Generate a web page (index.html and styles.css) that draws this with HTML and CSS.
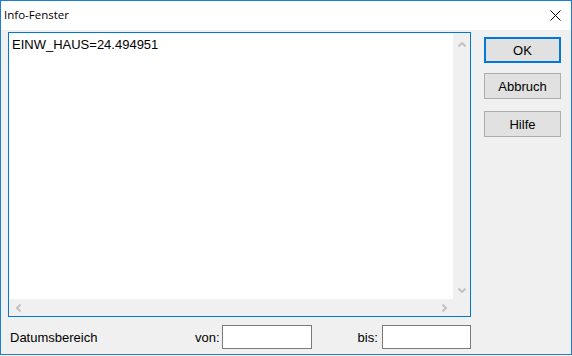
FILE: index.html
```html
<!DOCTYPE html>
<html lang="de">
<head>
    <meta charset="UTF-8">
    <title>Info-Fenster</title>
    <link rel="stylesheet" href="styles.css">
</head>
<body>
    <div class="window">
        <div class="titlebar">
            <span class="title">Info-Fenster</span>
            <span class="close">
                <svg width="11" height="11" viewBox="0 0 11 11"><path d="M0.5 0.5 L10.5 10.5 M10.5 0.5 L0.5 10.5" stroke="#000" stroke-width="1"/></svg>
            </span>
        </div>

        <div class="client">
            <div class="top-row">
                <div class="memo">
                    <div class="memo-text">EINW_HAUS=24.494951</div>
                    <div class="vscroll">
                        <svg width="8" height="5" viewBox="0 0 8 5"><path d="M0.5 4.5 L4 1 L7.5 4.5" fill="none" stroke="#c2c2c2" stroke-width="2"/></svg>
                        <svg width="8" height="5" viewBox="0 0 8 5"><path d="M0.5 0.5 L4 4 L7.5 0.5" fill="none" stroke="#c2c2c2" stroke-width="2"/></svg>
                    </div>
                    <div class="hscroll">
                        <svg width="5" height="8" viewBox="0 0 5 8"><path d="M4.5 0.5 L1 4 L4.5 7.5" fill="none" stroke="#c2c2c2" stroke-width="2"/></svg>
                        <svg width="5" height="8" viewBox="0 0 5 8"><path d="M0.5 0.5 L4 4 L0.5 7.5" fill="none" stroke="#c2c2c2" stroke-width="2"/></svg>
                    </div>
                    <div class="corner"></div>
                </div>

                <div class="buttons">
                    <button class="btn btn-default">OK</button>
                    <button class="btn btn-cancel">Abbruch</button>
                    <button class="btn btn-help">Hilfe</button>
                </div>
            </div>

            <div class="footer">
                <span class="footer-title">Datumsbereich</span>
                <label class="field-label" for="von">von:</label>
                <input type="text" id="von" class="date-input">
                <label class="field-label bis-label" for="bis">bis:</label>
                <input type="text" id="bis" class="date-input bis-input">
            </div>
        </div>
    </div>
</body>
</html>
```

FILE: styles.css
```css
body {
    margin: 0;
    background: #fff;
    font-family: 'Liberation Sans', Arial, sans-serif;
    font-size: 13px;
    color: #000;
}

.window {
    width: 572px;
    height: 355px;
    box-sizing: border-box;
    border: 1px solid #1a7fd4;
    background: #f0f0f0;
    display: flex;
    flex-direction: column;
}

.titlebar {
    height: 29px;
    background: #fff;
    display: flex;
    align-items: center;
    justify-content: space-between;
    padding-left: 3px;
    padding-right: 10px;
}

.title {
    font-family: 'Open Sans', 'Noto Sans', sans-serif;
    font-size: 11.5px;
    margin-top: -2px;
}

.close {
    display: flex;
    margin-top: -1px;
}

.client {
    padding: 2px 0 0 7px;
}

.top-row {
    display: flex;
    align-items: flex-start;
}

/* Memo-Feld mit Scrollbalken */
.memo {
    width: 463px;
    height: 285px;
    box-sizing: border-box;
    border: 1px solid #0078d7;
    background: #fff;
    display: grid;
    grid-template-columns: 1fr 17px;
    grid-template-rows: 1fr 17px;
}

.memo-text {
    padding: 4px 0 0 3px;
    line-height: 15px;
}

.vscroll {
    background: #f0f0f0;
    display: flex;
    flex-direction: column;
    justify-content: space-between;
    align-items: center;
    padding: 9px 0 6px;
}

.hscroll {
    background: #f0f0f0;
    display: flex;
    justify-content: space-between;
    align-items: center;
    padding: 0 6px 0 7px;
}

.corner {
    background: #f0f0f0;
}

.buttons {
    display: flex;
    flex-direction: column;
    margin-left: 13px;
    padding-top: 5px;
}

.btn {
    width: 77px;
    height: 26px;
    box-sizing: border-box;
    background: #e1e1e1;
    border: 1px solid #adadad;
    font-family: 'Liberation Sans', Arial, sans-serif;
    font-size: 13px;
    color: #000;
    padding: 0;
}

.btn-default {
    border: 2px solid #0078d7;
}

.btn-cancel {
    margin-top: 10px;
}

.btn-help {
    margin-top: 12px;
}

.footer {
    display: flex;
    align-items: center;
    height: 24px;
    margin-top: 8px;
    padding-left: 2px;
}

.footer-title {
    width: 185px;
}

.date-input {
    width: 90px;
    height: 24px;
    box-sizing: border-box;
    border: 1px solid #7a7a7a;
    background: #fff;
    margin: 0 0 0 2px;
    padding: 0 3px;
    font-family: 'Liberation Sans', Arial, sans-serif;
    font-size: 13px;
}

.bis-label {
    margin-left: 46px;
}

.bis-input {
    width: 89px;
    margin-left: 4px;
}
```
